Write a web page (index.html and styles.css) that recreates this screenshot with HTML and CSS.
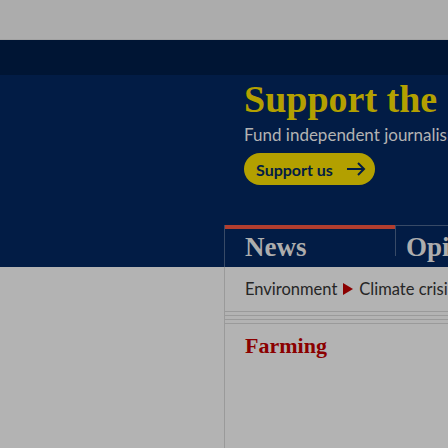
FILE: index.html
```html
<!DOCTYPE html>
<html lang="en">
<head>
<meta charset="utf-8">
<title>Farming</title>
<link rel="stylesheet" href="styles.css">
</head>
<body>
<div class="topbar"></div>
<div class="darkbar"></div>
<header class="masthead">
  <div class="support">
    <h2 class="support-title">Support the Guardian</h2>
    <p class="support-sub">Fund independent journalism with £2 per month</p>
    <a class="support-btn" href="#">Support us
      <svg class="arrow" width="20" height="16" viewBox="0 0 20 16" aria-hidden="true">
        <path d="M1 8H18M12 2L18 8L12 14" fill="none" stroke="currentColor" stroke-width="2"/>
      </svg>
    </a>
  </div>
  <nav class="pillars">
    <a class="pillar active" href="#">News</a>
    <a class="pillar" href="#">Opinion</a>
  </nav>
</header>
<main class="content">
  <div class="breadcrumb">
    <span>Environment</span>
    <svg class="tri" width="10" height="12" viewBox="0 0 10 12" aria-hidden="true"><polygon points="0,0 10,6 0,12" fill="currentColor"/></svg>
    <span>Climate crisis</span>
  </div>
  <div class="rules"></div>
  <h1 class="kicker">Farming</h1>
</main>
</body>
</html>
```
FILE: styles.css
```css
html, body {
  margin: 0;
  padding: 0;
}
body {
  width: 448px;
  height: 448px;
  overflow: hidden;
  background: #b3b3b3;
}
.topbar {
  height: 39px;
  background: #acacac;
  border-bottom: 1px solid #a2a2a2;
}
.darkbar {
  height: 35px;
  background: #001534;
}
.masthead {
  background: #021c45;
  padding-top: 4px;
}
.support {
  padding-left: 244px;
  white-space: nowrap;
}
.support-title {
  margin: 0;
  font-family: "Liberation Serif", serif;
  font-weight: 700;
  font-size: 38px;
  line-height: 40px;
  color: #b3a000;
}
.support-sub {
  margin: 4px 0 0;
  font-family: Lato, sans-serif;
  font-size: 17px;
  line-height: 24px;
  color: #b3b3b3;
}
.support-btn {
  display: inline-flex;
  align-items: center;
  gap: 13px;
  margin-top: 6px;
  height: 32px;
  padding: 0 9px 0 12px;
  border-radius: 16px;
  background: #b3a000;
  color: #021c45;
  text-decoration: none;
  font-family: Lato, sans-serif;
  font-weight: 700;
  font-size: 16px;
}
.arrow {
  display: block;
  flex-shrink: 0;
}
.pillars {
  display: flex;
  margin: 40px 0 0 224px;
  height: 42px;
  border-left: 1px solid #384a66;
}
.pillar {
  position: relative;
  flex: 0 0 auto;
  width: 171px;
  box-sizing: border-box;
  padding: 6px 0 0 10px;
  border-top: 1px solid #384a66;
  font-family: "Liberation Serif", serif;
  font-weight: 700;
  font-size: 27px;
  line-height: 30px;
  color: #adadad;
  text-decoration: none;
  white-space: nowrap;
}
.pillar::after {
  content: "";
  position: absolute;
  right: 0;
  top: 0;
  width: 1px;
  height: 27px;
  background: #384a66;
}
.pillar.active {
  padding-left: 20px;
  padding-top: 3px;
  border-top: 4px solid #b23e2f;
}
.pillar.active::after {
  top: -4px;
  height: 31px;
}
.content {
  margin-left: 224px;
  border-left: 1px solid #9a9a9a;
  height: 200px;
}
.breadcrumb {
  display: flex;
  align-items: center;
  gap: 6px;
  padding: 12px 0 0 20px;
  height: 32px;
  box-sizing: border-box;
  font-family: Lato, sans-serif;
  font-size: 16.5px;
  line-height: 20px;
  color: #262626;
  white-space: nowrap;
}
.breadcrumb > * {
  flex-shrink: 0;
}
.tri {
  color: #8b0000;
}
.rules {
  margin-top: 12px;
  height: 13px;
  background: repeating-linear-gradient(to bottom, #9a9a9a 0 1px, transparent 1px 4px);
}
.kicker {
  margin: 8px 0 0 20px;
  font-family: "Liberation Serif", serif;
  font-weight: 700;
  font-size: 22px;
  line-height: 28px;
  color: #8b0000;
}
```
